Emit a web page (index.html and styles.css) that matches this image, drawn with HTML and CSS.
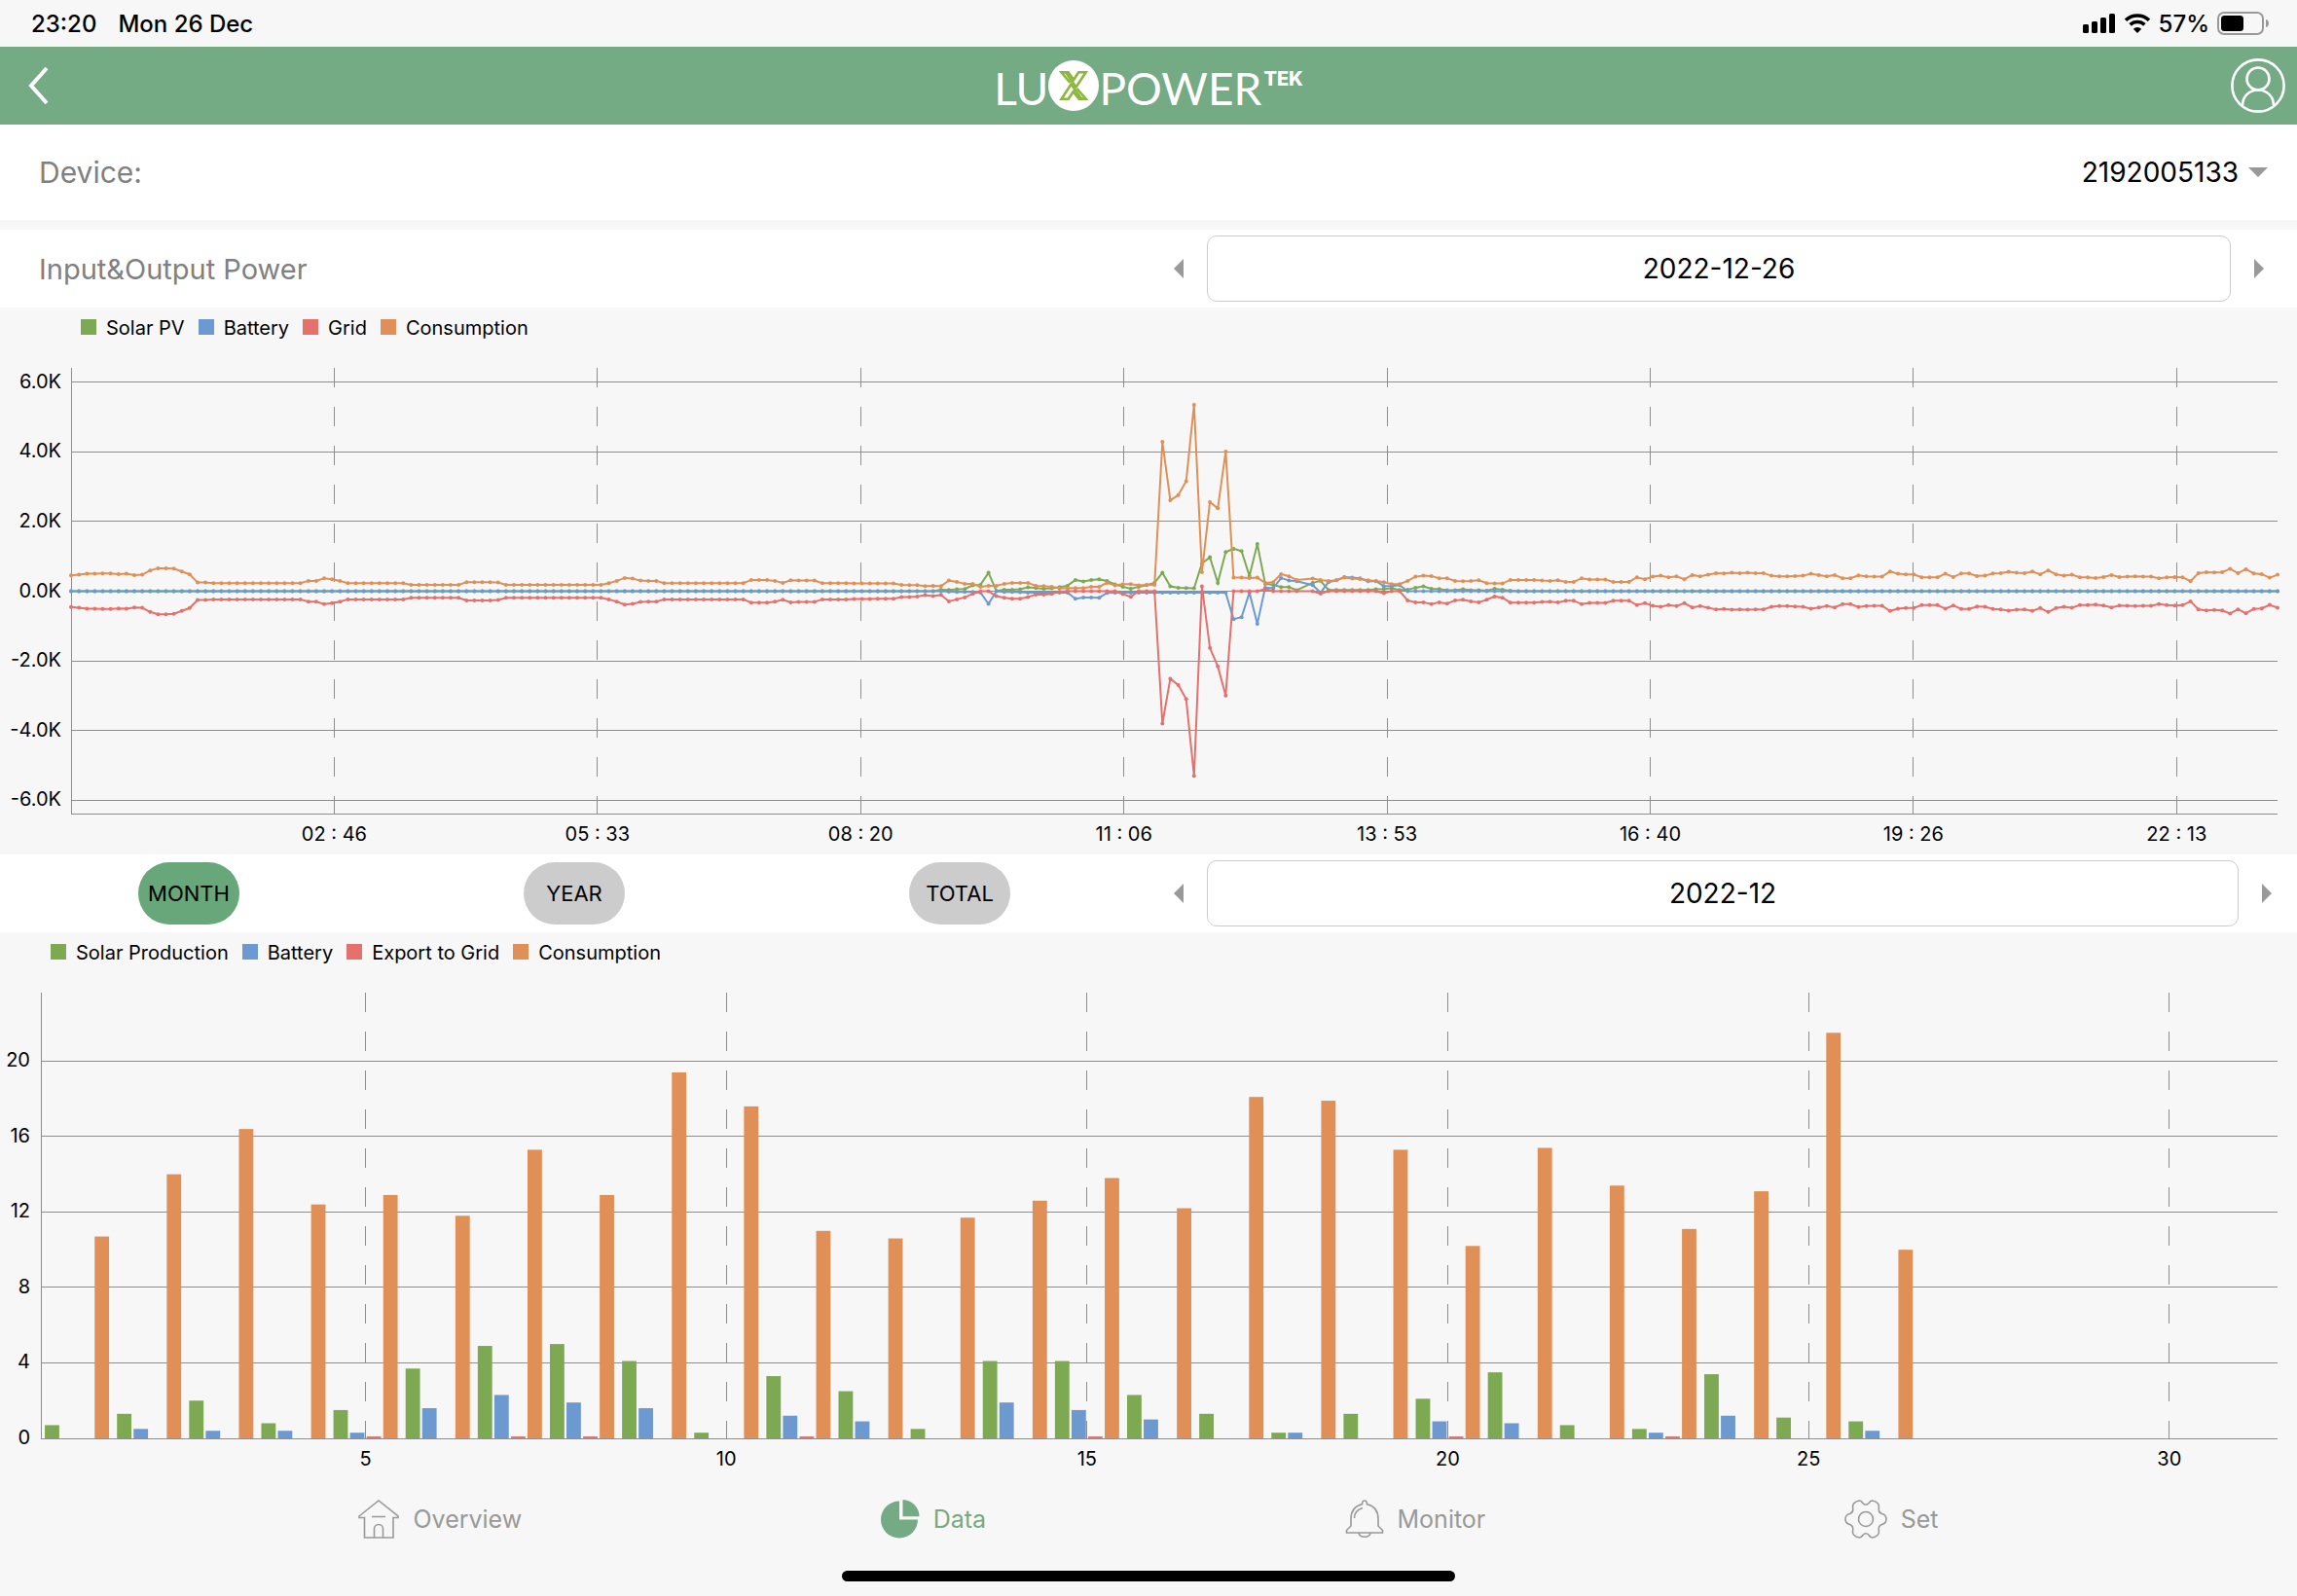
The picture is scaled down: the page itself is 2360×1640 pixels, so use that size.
FILE: index.html
```html
<!DOCTYPE html>
<html lang="en">
<head>
    <meta charset="UTF-8">
    <meta name="viewport" content="width=device-width, initial-scale=1.0">
    <title>LuxPowerTek - Data</title>
    <link rel="stylesheet" href="styles.css">
</head>
<body>
    <div class="status-bar">
        <div class="status-left">
            <span>23:20</span>
            <span>Mon 26 Dec</span>
        </div>
        <div class="status-right">
            <svg class="signal-icon" width="34" height="20" viewBox="0 0 34 20">
                <rect x="0" y="11" width="6" height="9" rx="1.5"/>
                <rect x="9" y="8" width="6" height="12" rx="1.5"/>
                <rect x="18" y="4" width="6" height="16" rx="1.5"/>
                <rect x="27" y="0" width="6" height="20" rx="1.5"/>
            </svg>
            <svg class="wifi-icon" width="28" height="20" viewBox="0 0 28 20">
                <path d="M2 6.8a17.4 17.4 0 0 1 24 0M6.6 11.4a10.8 10.8 0 0 1 14.8 0" fill="none" stroke="#000" stroke-width="3.6"/>
                <path d="M14 20l-4.2-4.2a6 6 0 0 1 8.4 0z"/>
            </svg>
            <span>57%</span>
            <svg class="battery-icon" width="54" height="24" viewBox="0 0 54 24">
                <rect x="1" y="1" width="46" height="22" rx="6" fill="none" stroke="#999" stroke-width="2"/>
                <rect x="4" y="4" width="23" height="16" rx="3.5"/>
                <path d="M50 8c2 .6 3 2 3 4s-1 3.400-3 4z" fill="#999"/>
            </svg>
        </div>
    </div>

    <header class="header">
        <button class="icon-btn back-btn" aria-label="Back">
            <svg width="22" height="40" viewBox="0 0 22 40">
                <path d="M19 2L3 20l16 18" fill="none" stroke="#fff" stroke-width="4"/>
            </svg>
        </button>
        <div class="logo">
            <span class="logo-text">LU</span>
            <svg width="52" height="52" viewBox="0 0 52 52">
                <circle cx="26" cy="26" r="26" fill="#fff"/>
                <g fill="none" stroke="#8cb63c" stroke-width="2.6">
                    <path d="M22.500 23L13.500 12.300h7L26 19.500"/>
                    <path d="M13.500 12.300h4.500L28.500 27.500L38.700 12.300h-7.500L25.500 21"/>
                    <path d="M29.500 29L38.700 39.700h-7L26 32.500"/>
                    <path d="M38.700 39.700h-4.500L23.500 24.500L13.500 39.700h7.200L26.500 31"/>
                </g>
            </svg>
            <span class="logo-text">POWER</span>
            <span class="logo-tek">TEK</span>
        </div>
        <button class="icon-btn" aria-label="Account">
            <svg width="56" height="56" viewBox="0 0 56 56" fill="none" stroke="#fff" stroke-width="2.6">
                <circle cx="28" cy="28" r="26.600"/>
                <circle cx="28" cy="21" r="11.500"/>
                <path d="M12 48.500C12 39 19 32.500 28 32.500S44 39 44 48.500"/>
            </svg>
        </button>
    </header>

    <main>
        <div class="device-row">
            <label class="row-label" for="device">Device:</label>
            <div class="device-picker">
                <select id="device" class="device-select">
                    <option>2192005133</option>
                </select>
                <span class="caret"></span>
            </div>
        </div>

        <div class="control-row">
            <div class="control-half title-half">
                <h2 class="row-label">Input&amp;Output Power</h2>
            </div>
            <div class="control-half date-half">
                <button class="arrow prev" aria-label="Previous day"></button>
                <input class="date-box" type="text" value="2022-12-26" aria-label="Day" readonly>
                <button class="arrow next" aria-label="Next day"></button>
            </div>
        </div>

        <section class="chart">
            <ul class="legend power-legend">
                <li><i class="swatch solar"></i>Solar PV</li>
                <li><i class="swatch battery"></i>Battery</li>
                <li><i class="swatch grid"></i>Grid</li>
                <li><i class="swatch load"></i>Consumption</li>
            </ul>
            <svg id="powerChart" class="plot power-plot"></svg>
        </section>

        <div class="control-row">
            <div class="control-half tabs">
                <button class="tab active">MONTH</button>
                <button class="tab">YEAR</button>
                <button class="tab">TOTAL</button>
            </div>
            <div class="control-half date-half month-half">
                <button class="arrow prev" aria-label="Previous month"></button>
                <input class="date-box" type="text" value="2022-12" aria-label="Month" readonly>
                <button class="arrow next" aria-label="Next month"></button>
            </div>
        </div>

        <section class="chart">
            <ul class="legend energy-legend">
                <li><i class="swatch solar"></i>Solar Production</li>
                <li><i class="swatch battery"></i>Battery</li>
                <li><i class="swatch grid"></i>Export to Grid</li>
                <li><i class="swatch load"></i>Consumption</li>
            </ul>
            <svg id="energyChart" class="plot energy-plot"></svg>
        </section>
    </main>

    <nav class="bottom-nav">
        <a href="#overview">
            <svg width="42" height="40" viewBox="0 0 42 40">
                <path d="M1 17L21 1l20 16v1.500h-5V39H6.500V18.500H1zM14 17.500h14M16.500 39V30a4.500 4.500 0 0 1 9 0v9"/>
            </svg>
            Overview
        </a>
        <a href="#data" class="active">
            <svg width="40" height="40" viewBox="0 0 40 40">
                <path class="solid" d="M19 1.500V20.500H38A19 19 0 1 1 19 1.500z"/>
                <path class="solid" d="M22.500 0A17.500 17.500 0 0 1 39.500 17.300H22.500z"/>
            </svg>
            Data
        </a>
        <a href="#monitor">
            <svg width="40" height="40" viewBox="0 0 40 40">
                <path d="M20 1c-1.700 0-2.500 1.500-2.500 3.800C10 6.500 6 12 6 20v7L1.500 31.500V34h37v-2.500L34 27v-7c0-8-4-13.500-11.500-15.200C22.500 2.500 21.700 1 20 1zM14 34.500a6.200 5 0 0 0 12 0M9.500 19c0-5 3.500-9 8.500-10.500"/>
            </svg>
            Monitor
        </a>
        <a href="#set">
            <svg width="44" height="40" viewBox="0 0 44 40">
                <path d="M15.500 1Q12 1.300 9.500 4Q8 6 8.700 9Q9.300 13 5.500 14.500Q1 15.500 1 20Q1 24.500 5.500 25.500Q9.300 27 8.700 31Q8 34 9.500 36Q12 38.700 15.500 39Q17.500 38.800 18.800 36.500Q22 33 25.200 36.500Q26.500 38.800 28.500 39Q32 38.700 34.500 36Q36 34 35.300 31Q34.700 27 38.500 25.500Q43 24.500 43 20Q43 15.500 38.500 14.500Q34.700 13 35.300 9Q36 6 34.500 4Q32 1.300 28.500 1Q26.500 1.200 25.200 3.500Q22 7 18.800 3.500Q17.500 1.200 15.500 1z"/>
                <circle cx="22" cy="20" r="7.500"/>
            </svg>
            Set
        </a>
    </nav>
    <div class="home-bar"></div>

    <script src="charts.js"></script>
</body>
</html>
```
FILE: styles.css
```css
* {
    box-sizing: border-box;
}
body {
    margin: 0;
    min-height: 100vh;
    background-color: #f7f7f7;
    color: #000;
    font-family: Inter, "Liberation Sans", sans-serif;
    font-size: 20px;
}
button, input, select {
    font-family: inherit;
    color: inherit;
}
button {
    border: none;
    background: none;
    padding: 0;
    cursor: pointer;
}

/* status bar */
.status-bar {
    display: flex;
    justify-content: space-between;
    align-items: center;
    height: 48px;
    padding: 0 28px 0 32px;
    font-size: 24px;
    font-weight: 500;
}
.status-left {
    display: flex;
    gap: 22px;
}
.status-right {
    display: flex;
    align-items: center;
    gap: 8px;
}

/* header */
.header {
    display: flex;
    justify-content: space-between;
    align-items: center;
    height: 80px;
    padding: 0 12px;
    background-color: #74aa84;
}
.icon-btn {
    display: flex;
    width: 56px;
}
.back-btn {
    padding-left: 17px;
}
.logo {
    display: flex;
    align-items: center;
    color: #fff;
}
.logo-text {
    padding-top: 6px;
    font-family: Lato, Inter, sans-serif;
    font-size: 46px;
    line-height: 52px;
}
.logo-tek {
    align-self: flex-start;
    margin-left: 2px;
    font-size: 20px;
    font-weight: 800;
    line-height: 44px;
}

/* device row */
.device-row {
    display: flex;
    justify-content: space-between;
    align-items: center;
    height: 98px;
    margin-bottom: 10px;
    padding: 0 30px 0 40px;
    background-color: #fff;
}
.row-label {
    margin: 0;
    color: #808080;
    font-size: 30px;
    font-weight: 400;
}
.device-picker {
    display: flex;
    align-items: center;
    gap: 10px;
}
.device-select {
    appearance: none;
    border: none;
    background: none;
    font-size: 28px;
    text-align-last: right;
}
.caret {
    border: 10px solid transparent;
    border-top-color: #999;
    border-bottom: none;
}

/* rows with a title or tabs on the left and a date box on the right */
.control-row {
    display: flex;
    height: 80px;
    background-color: #fff;
}
.control-half {
    width: 50%;
    display: flex;
    align-items: center;
}
.title-half {
    padding-left: 40px;
}
.title-half .row-label {
    font-size: 29px;
}
.date-half {
    gap: 24px;
    padding: 0 34px 0 26px;
}
.month-half {
    padding-right: 26px;
}
.arrow {
    width: 0;
    height: 0;
    border: 10px solid transparent;
}
.arrow.prev {
    border-right-color: #999;
    border-left: none;
}
.arrow.next {
    border-left-color: #999;
    border-right: none;
}
.date-box {
    flex: 1;
    min-width: 0;
    height: 68px;
    border: 1px solid #ccc;
    border-radius: 10px;
    background-color: #fff;
    font-size: 28px;
    text-align: center;
}
.tabs {
    justify-content: space-between;
    padding: 0 142px;
}
.tab {
    width: 104px;
    height: 64px;
    border-radius: 32px;
    background-color: #ccc;
    font-size: 22px;
}
.tab.active {
    background-color: #67a779;
}

/* charts */
.legend {
    display: flex;
    gap: 14px;
    height: 40px;
    margin: 0;
    padding-top: 8px;
    list-style: none;
    line-height: 26px;
}
.power-legend {
    padding-left: 83px;
}
.energy-legend {
    padding-left: 52px;
}
.legend li {
    display: flex;
    gap: 10px;
}
.swatch {
    width: 16px;
    height: 16px;
    margin-top: 4px;
}
.swatch.solar { background-color: #7ea953; }
.swatch.battery { background-color: #6c99d0; }
.swatch.grid { background-color: #e5706c; }
.swatch.load { background-color: #e09056; }
.plot {
    display: block;
    width: 100%;
}
.power-plot {
    height: 522px;
}
.energy-plot {
    height: 520px;
}
.plot text {
    font-size: 20px;
}
.gridline {
    stroke: #8e8e8e;
    stroke-width: 1;
    shape-rendering: crispEdges;
}
.dashed {
    stroke-dasharray: 20 20;
}
.line {
    fill: none;
    stroke-width: 2;
}
.bar {
    stroke: none;
}

/* bottom navigation */
.bottom-nav {
    display: flex;
    justify-content: space-evenly;
    align-items: center;
    height: 86px;
}
.bottom-nav a {
    display: flex;
    align-items: center;
    gap: 14px;
    color: #999;
    font-size: 25px;
    text-decoration: none;
}
.bottom-nav svg {
    fill: none;
    stroke: #999;
    stroke-width: 1.600;
}
.bottom-nav .active {
    color: #74aa84;
}
.bottom-nav .solid {
    fill: #74aa84;
    stroke: none;
}
.home-bar {
    width: 630px;
    max-width: 60%;
    height: 11px;
    margin: 10px auto 0;
    border-radius: 6px;
    background-color: #000;
}
```
FILE: charts.js
```js
const COLORS = { solar: '#7ea953', battery: '#6c99d0', grid: '#e5706c', load: '#e09056' };

// Power samples, one every 5 minutes. "25x12" repeats a value, "_" is a missing sample.
const WATTS_PER_COUNT = 9.3;

const loadNight = '49 51 54 54 55 55 53 54 50 51 64 71 71 70 61 52 27 27 25x12 32 32 40 37 32 ' +
    '25x8 20x7 28x4 27 20x13 25 32 41 39 33 32 32 25x11 35x3 32 26 34 33x3 25x4 24x3';
const loadDay = '24 24 24 20 19 19 16 17 16 33 29 23 23 14 17 17 23 26 26 26 17 16 14 9 9 10 10 14 14 26 18 22 22 18 20 20 ' +
    '461 281 297 340 576 59 275 256 431 42 42 41 42 26 28 53 46 35 _ 39 35 32 ' +
    '34 42 39 38 34 32 28 22 22 32 45 48 47 40 40 32 31 32 34 25 24 24';
const loadEvening = '35 35 35 35 33 32 34 29 29 40 36 36 36 29 29 29 43 37 45 48 43 46 37 50 46 51 56 55 57 56 ' +
    '57 56 56 48 46 46 47 48 54 50 46 50 40 40 49 46 45 45 61 54 52 52 43 43 43 54 44 55 55 47 ' +
    '48 55 56 60 57 56 61 52 64 52 48 51 43 43 41 44 50 44 45 46 45 45 40 43 44 43 31 56 59 58 ' +
    '59 69 56 68 55 53 42 51';
const gridDay = '-23 -23 -23 -18 -18 -16 -12 -15 -11 -31 -25 -19 -8 0 0 -15 -20 -23 -23 -18 -10 -10 -8 -1 0x7 -9 -17 0x3 ' +
    '-409 -270 -290 -333 -570 15 -175 -232 -322 0 0 0 0 7 0 0 0 0 _ 0 -7 0 ' +
    '0x6 -6 0 0 -28 -34 -34 -40 -34 -38 -28 -26 -31 -34 -26 -16 -20';
const solarDay = '0x110 5 4 6 7 18 20 57 1 5 5 6 12 10 8 9 13 17 35 30 35 37 32 21 14 8 14 19 26 ' +
    '57 15 11 10 9 86 105 26 121 131 124 47 146 23 20 13 13 3 _ 26 32 4 ' +
    '4x5 6 7 9 4 5 11 15 8 7 3 3 6 3 3 2 8 5 2 0x97';
const batteryDay = '0x111 -1 -2 -2 -2 -4 -39 0 -2 -2 -3 -4x6 -23 -19 -19 -20 -5 -4x15 ' +
    '-86 -80 -4 -101 11 9 41 33 31 _ 19 -4 28 34 44 42 40 31 31 16 16 19 0x111';

function expand(text) {
    return text.split(' ').flatMap(part => {
        const [value, times] = part.split('x');
        const watts = value === '_' ? null : Number(value) * WATTS_PER_COUNT;
        return Array(Number(times || 1)).fill(watts);
    });
}

const negate = values => values.map(v => v === null ? null : -v);

const power = {
    solar: expand(solarDay),
    battery: expand(batteryDay),
    grid: [...negate(expand(loadNight)), ...expand(gridDay), ...negate(expand(loadEvening))],
    load: expand(loadNight + ' ' + loadDay + ' ' + loadEvening)
};
const powerTimes = ['02 : 46', '05 : 33', '08 : 20', '11 : 06', '13 : 53', '16 : 40', '19 : 26', '22 : 13'];

// Energy per day in kWh: solar, battery, export, consumption
const energy = [
    [0.7, 0, 0, 10.7], [1.3, 0.5, 0, 14.0], [2.0, 0.4, 0, 16.4], [0.8, 0.4, 0, 12.4],
    [1.5, 0.3, 0.1, 12.9], [3.7, 1.6, 0, 11.8], [4.9, 2.3, 0.1, 15.3], [5.0, 1.9, 0.1, 12.9],
    [4.1, 1.6, 0, 19.4], [0.3, 0, 0, 17.6], [3.3, 1.2, 0.1, 11.0], [2.5, 0.9, 0, 10.6],
    [0.5, 0, 0, 11.7], [4.1, 1.9, 0, 12.6], [4.1, 1.5, 0.1, 13.8], [2.3, 1.0, 0, 12.2],
    [1.3, 0, 0, 18.1], [0.3, 0.3, 0, 17.9], [1.3, 0, 0, 15.3], [2.1, 0.9, 0.1, 10.2],
    [3.5, 0.8, 0, 15.4], [0.7, 0, 0, 13.4], [0.5, 0.3, 0.1, 11.1], [3.4, 1.2, 0, 13.1],
    [1.1, 0, 0, 21.5], [0.9, 0.4, 0, 10.0]
];

function add(svg, name, attrs, text) {
    const el = document.createElementNS('http://www.w3.org/2000/svg', name);
    for (const key in attrs) {
        el.setAttribute(key, attrs[key]);
    }
    if (text !== undefined) {
        el.textContent = text;
    }
    svg.appendChild(el);
}

function gridLine(svg, x1, y1, x2, y2, dashed) {
    add(svg, 'line', { x1, y1, x2, y2, class: dashed ? 'gridline dashed' : 'gridline' });
}

function label(svg, x, y, anchor, text) {
    add(svg, 'text', { x, y, 'text-anchor': anchor }, text);
}

function drawPower() {
    const svg = document.getElementById('powerChart');
    svg.innerHTML = '';
    const left = 73;
    const right = svg.clientWidth - 20;
    const top = 22;
    const bottom = svg.clientHeight - 42;
    const max = 6415;
    const yOf = w => top + (max - w) / (2 * max - 30) * (bottom - top);
    const step = (right - left) / (power.load.length - 1);

    for (let k = 6; k >= -6; k -= 2) {
        gridLine(svg, left, yOf(k * 1000), right, yOf(k * 1000));
        label(svg, left - 10, yOf(k * 1000) + 6, 'end', k.toFixed(1) + 'K');
    }
    powerTimes.forEach((time, i) => {
        const x = left + (i + 1) * 33.28 * step;
        gridLine(svg, x, top, x, bottom, true);
        label(svg, x, bottom + 28, 'middle', time);
    });
    gridLine(svg, left, top, left, bottom);
    gridLine(svg, left, bottom, right, bottom);

    for (const name in power) {
        const points = power[name]
            .map((w, i) => w === null ? null : [left + i * step, yOf(w)])
            .filter(p => p);
        add(svg, 'polyline', { points: points.map(p => p.map(n => n.toFixed(1))).join(' '), class: 'line', stroke: COLORS[name] });
        points.forEach(p => add(svg, 'circle', { cx: p[0].toFixed(1), cy: p[1].toFixed(1), r: 2, fill: COLORS[name] }));
    }
}

function drawEnergy() {
    const svg = document.getElementById('energyChart');
    svg.innerHTML = '';
    const left = 42;
    const right = svg.clientWidth - 20;
    const top = 22;
    const bottom = svg.clientHeight - 40;
    const day = (right - left) / 31;
    const yOf = v => bottom - v / 23.63 * (bottom - top);

    for (let v = 0; v <= 20; v += 4) {
        gridLine(svg, left, yOf(v), right, yOf(v));
        label(svg, left - 11, yOf(v) + 6, 'end', v);
    }
    for (let d = 5; d <= 30; d += 5) {
        const x = left + (d - 0.5) * day;
        gridLine(svg, x, top, x, bottom, true);
        label(svg, x, bottom + 28, 'middle', d);
    }
    gridLine(svg, left, top, left, bottom);

    // bar width, space and group space are shares of one day
    energy.forEach((values, i) => {
        values.forEach((v, n) => {
            if (v > 0) {
                add(svg, 'rect', {
                    class: 'bar',
                    x: left + (i + 0.055 + n * 0.23) * day,
                    y: yOf(v),
                    width: 0.2 * day,
                    height: bottom - yOf(v),
                    fill: Object.values(COLORS)[n]
                });
            }
        });
    });
}

function draw() {
    drawPower();
    drawEnergy();
}

draw();
window.addEventListener('resize', draw);
```
